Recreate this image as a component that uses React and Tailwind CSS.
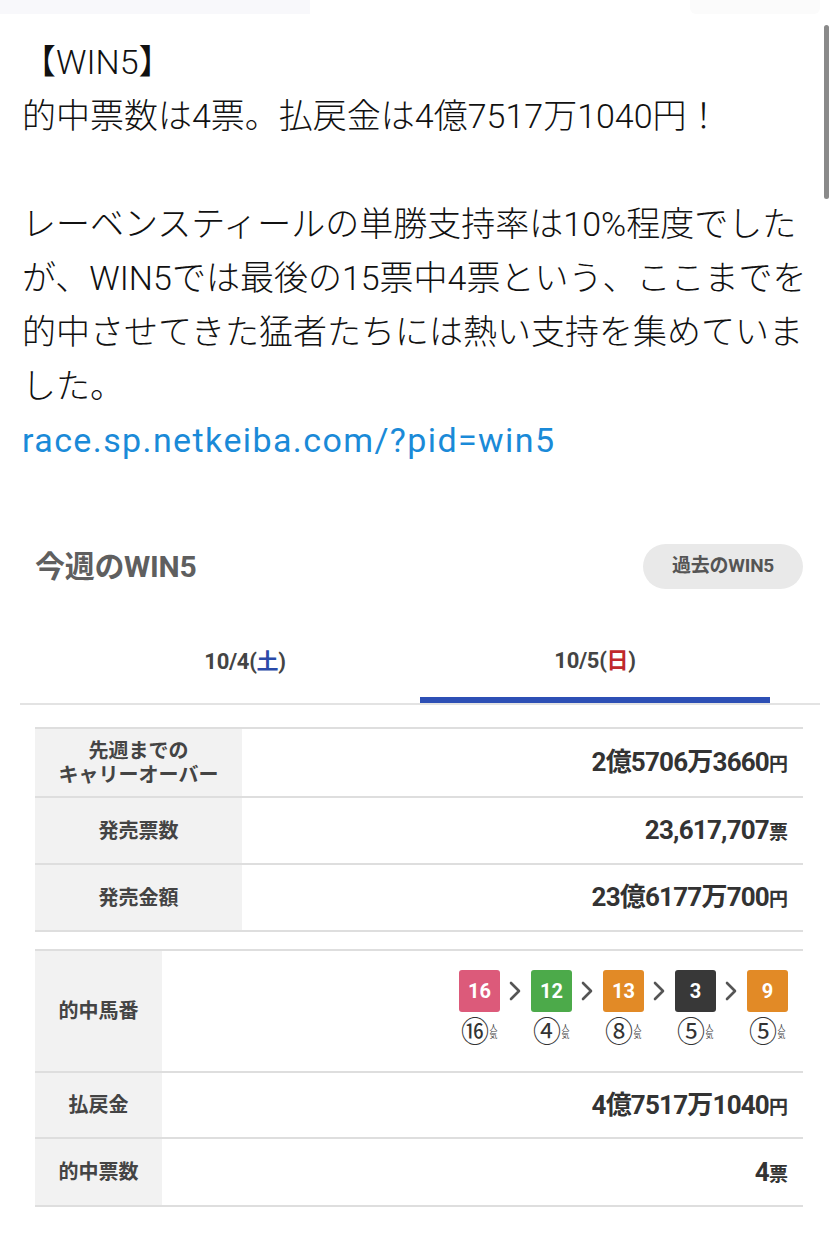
import React from "react";

const body = { fontFamily: 'Roboto, "Noto Sans CJK JP", sans-serif' };
const sec = { fontFamily: 'Roboto, "Noto Sans CJK JP", sans-serif' };
const cjk = { fontFamily: '"Noto Sans CJK JP", sans-serif' };

function Row({ label, children, wide, h }) {
  return (
    <div className={`flex border-b-2 border-[#dedede] ${h}`}>
      <div
        className={`${wide ? "w-[207px]" : "w-[127px]"} shrink-0 bg-[#f2f2f2] flex items-center justify-center text-center text-[20px] leading-[24px] font-bold text-[#444]`}
      >
        {label}
      </div>
      <div className="flex-1 flex items-center justify-end pr-[15px]">{children}</div>
    </div>
  );
}

function Val({ n, u }) {
  return (
    <span className="text-[26px] font-bold text-[#333] tracking-[-0.8px]">
      {n}
      <span className="text-[19px] tracking-normal">{u}</span>
    </span>
  );
}

const horses = [
  { n: "16", c: "bg-[#dc5a7a]", p: "⑯" },
  { n: "12", c: "bg-[#4caa4a]", p: "④" },
  { n: "13", c: "bg-[#e28a26]", p: "⑧" },
  { n: "3", c: "bg-[#383838]", p: "⑤" },
  { n: "9", c: "bg-[#e28a26]", p: "⑤" },
];

function Arrow() {
  return (
    <svg width="31" height="42" viewBox="0 0 31 42" className="shrink-0">
      <path d="M11 13 L19 21 L11 29" fill="none" stroke="#555" strokeWidth="2.6" strokeLinecap="round" strokeLinejoin="round" />
    </svg>
  );
}

export default function App() {
  return (
    <div className="relative w-[840px] min-h-[1241px] bg-white overflow-hidden">
      <div className="flex h-[14px]">
        <div className="w-[310px] bg-[#f8f8fb]" />
        <div className="flex-1" />
        <div className="w-[130px] bg-[#fbfbfb] mr-[20px] rounded-b-[6px]" />
      </div>
      <div className="absolute right-[11px] top-[25px] w-[5px] h-[174px] rounded-full bg-[#8a8a8a]" />

      <div className="pt-[21px] px-[22px] text-[34px] leading-[54px] text-[#111] whitespace-nowrap font-light" style={body}>
        <div>【WIN5】</div>
        <div>的中票数は4票。払戻金は4億7517万1040円！</div>
        <div className="h-[54px]" />
        <div>レーベンスティールの単勝支持率は10%程度でした</div>
        <div>が、WIN5では最後の15票中4票という、ここまでを</div>
        <div>的中させてきた猛者たちには熱い支持を集めていま</div>
        <div>した。</div>
        <div className="text-[#1a8ad8] font-normal tracking-[1.4px]">race.sp.netkeiba.com/?pid=win5</div>
      </div>

      <div className="px-[20px] mt-[73px]" style={sec}>
        <div className="flex items-center justify-between pl-[15px] pr-[17px] h-[52px]">
          <div className="text-[30px] font-bold text-[#5f5f5f] tracking-[-0.3px]">今週のWIN5</div>
          <div className="h-[45px] w-[160px] justify-center rounded-full bg-[#e9e9e9] flex items-center text-[19px] font-bold text-[#555] tracking-[-0.2px]">
            過去のWIN5
          </div>
        </div>

        <div className="mt-[26px] border-b-2 border-[#e3e3e3] px-[50px] flex">
          <div className="flex-1 h-[85px] flex items-center justify-center pt-[2px] text-[22px] font-bold text-[#444] tracking-[-0.3px]">
            10/4(<span className="text-[#2a4aa8]">土</span>)
          </div>
          <div className="flex-1 h-[85px] flex items-center justify-center text-[22px] font-bold text-[#444] tracking-[-0.3px] border-b-[6px] border-[#2d4fb5] pt-[6px]">
            10/5(<span className="text-[#c0282d]">日</span>)
          </div>
        </div>

        <div className="ml-[15px] mr-[17px] mt-[22px] border-t-2 border-[#dedede]">
          <Row label={<>先週までの<br />キャリーオーバー</>} wide h="h-[69px]">
            <Val n="2億5706万3660" u="円" />
          </Row>
          <Row label="発売票数" wide h="h-[67px]">
            <Val n="23,617,707" u="票" />
          </Row>
          <Row label="発売金額" wide h="h-[67px]">
            <Val n="23億6177万700" u="円" />
          </Row>
        </div>

        <div className="ml-[15px] mr-[17px] mt-[17px] border-t-2 border-[#dedede]">
          <Row label="的中馬番" h="h-[122px]">
            <div className="flex flex-col items-end mt-[-6px]">
              <div className="flex items-center">
                {horses.map((h, i) => (
                  <React.Fragment key={i}>
                    {i > 0 && <Arrow />}
                    <div className={`w-[41px] h-[42px] rounded-[3px] ${h.c} flex items-center justify-center text-white text-[20px] font-bold`}>
                      {h.n}
                    </div>
                  </React.Fragment>
                ))}
              </div>
              <div className="flex mt-[2px]">
                {horses.map((h, i) => (
                  <div key={i} className={`w-[41px] flex items-center justify-center ${i > 0 ? "ml-[31px]" : ""}`}>
                    <span className="text-[28px] leading-[32px] text-[#333]" style={cjk}>{h.p}</span>
                    <span className="text-[8px] leading-[9px] text-[#444] mt-[2px] [writing-mode:vertical-rl]" style={cjk}>
                      人気
                    </span>
                  </div>
                ))}
              </div>
            </div>
          </Row>
          <Row label="払戻金" h="h-[66px]">
            <Val n="4億7517万1040" u="円" />
          </Row>
          <Row label="的中票数" h="h-[68px]">
            <Val n="4" u="票" />
          </Row>
        </div>
      </div>
    </div>
  );
}
